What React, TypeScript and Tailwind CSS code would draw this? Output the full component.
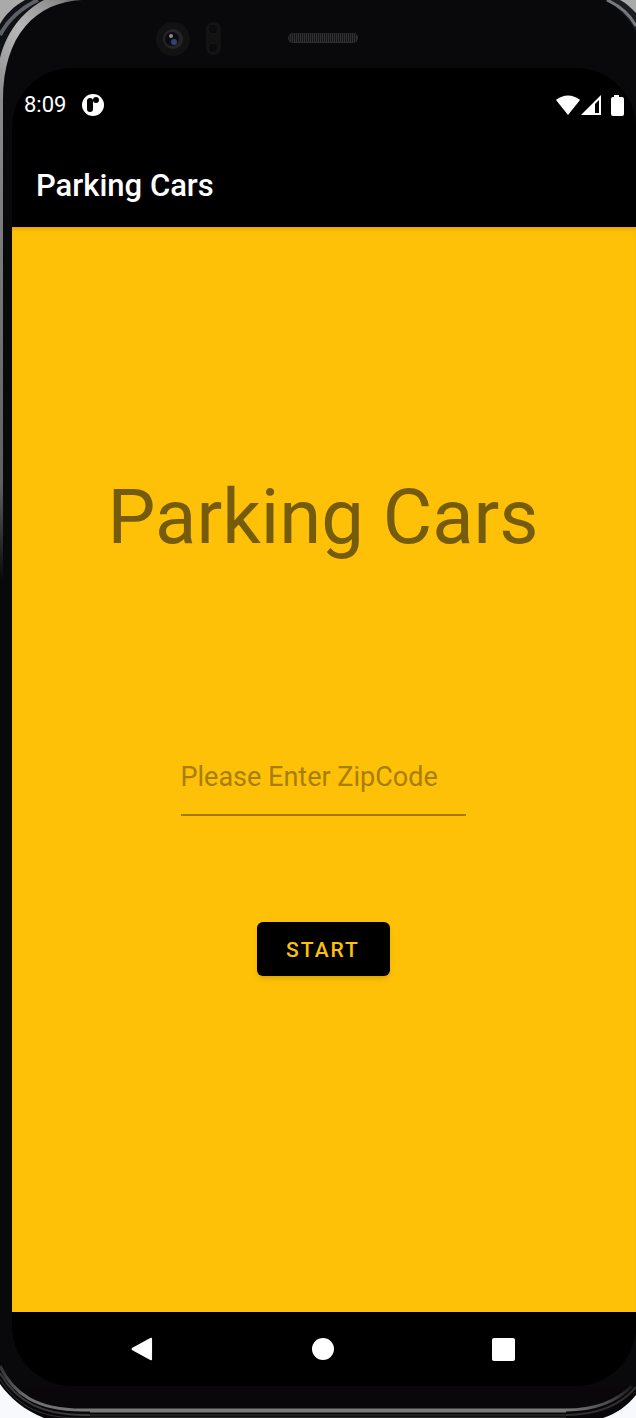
import { useState } from "react";

const font = "font-['Roboto',sans-serif]";

function TopLeftCorner() {
  return (
    <svg className="absolute top-0 left-0" width="90" height="100" viewBox="0 0 90 100" fill="none" aria-hidden="true">
      <defs>
        <linearGradient id="tl" x1="0" y1="100" x2="90" y2="0" gradientUnits="userSpaceOnUse">
          <stop offset="0" stopColor="#8a8a8a" />
          <stop offset="0.5" stopColor="#b8b8b8" />
          <stop offset="0.85" stopColor="#888" />
          <stop offset="1" stopColor="#444" />
        </linearGradient>
      </defs>
      <path d="M0 0H80C35 0 3 35 3 100H0Z" fill="#101114" />
      <path d="M0 35C8 20 21 8 38 0" stroke="#5d6067" strokeWidth="4" />
      <path d="M0 0H25C14 6 5 15 0 24Z" fill="#aaa" />
      <path d="M44 0H82C36 2 3 35 3 100H0V58C6 34 21 12 44 0Z" fill="url(#tl)" />
    </svg>
  );
}

function TopRightCorner() {
  return (
    <svg className="absolute top-0 right-0" width="36" height="34" viewBox="0 0 36 34" fill="none" aria-hidden="true">
      <path d="M5 0H36V32C29 18 18 7 5 0Z" fill="#1c1d20" />
      <path d="M7 0C20 6 30 15 36 26" stroke="#77797d" strokeWidth="3" />
      <path d="M20 0H36V13C31 8 26 3 20 0Z" fill="#aaa" />
    </svg>
  );
}

function BottomLeftCorner() {
  return (
    <svg className="absolute bottom-0 left-0" width="90" height="78" viewBox="0 0 90 78" fill="none" aria-hidden="true">
      <defs>
        <linearGradient id="bl" x1="0" y1="20" x2="90" y2="70" gradientUnits="userSpaceOnUse">
          <stop offset="0" stopColor="#2c2d2e" />
          <stop offset="0.4" stopColor="#6c6e70" />
          <stop offset="1" stopColor="#797b79" />
        </linearGradient>
      </defs>
      <rect y="46" width="90" height="32" fill="#09070a" />
      <path d="M0 26C13 54 37 70 82 70H90" stroke="url(#bl)" strokeWidth="3" />
      <path d="M0 33C14 58 38 75 82 75H90" stroke="#3a3a3a" strokeWidth="2" />
      <path d="M0 39C14 62 36 78 78 78H90" stroke="#333" strokeWidth="1" />
      <path d="M0 44C10 58 24 70 44 78H0Z" fill="#f8f9fd" />
    </svg>
  );
}

function BottomRightCorner() {
  return (
    <svg className="absolute right-0 bottom-0" width="70" height="78" viewBox="0 0 70 78" fill="none" aria-hidden="true">
      <defs>
        <linearGradient id="br" x1="0" y1="0" x2="70" y2="0" gradientUnits="userSpaceOnUse">
          <stop offset="0" stopColor="#797b79" />
          <stop offset="0.6" stopColor="#4a4b4b" />
          <stop offset="1" stopColor="#111" />
        </linearGradient>
      </defs>
      <rect y="46" width="70" height="32" fill="#09070a" />
      <path d="M0 70C28 70 50 62 66 46" stroke="url(#br)" strokeWidth="3" />
      <path d="M0 75C32 75 54 66 70 47" stroke="#303030" strokeWidth="2" />
      <path d="M70 55C61 66 50 74 37 78H70Z" fill="#f8f9fd" />
    </svg>
  );
}

function Bezel() {
  return (
    <div className="flex h-[68px] shrink-0 items-center bg-[#09090b] pt-2 pl-[156px]">
      <svg width="68" height="36" viewBox="0 0 68 36" aria-hidden="true">
        <circle cx="17" cy="19" r="17" fill="#121213" />
        <circle cx="17" cy="19" r="10" fill="#242426" />
        <circle cx="16" cy="19" r="7" fill="#0b0c12" />
        <circle cx="18" cy="22" r="3" fill="#34426e" />
        <circle cx="15" cy="16" r="2" fill="#8a8b90" />
        <rect x="50" y="2" width="15" height="33" rx="7" fill="#121213" />
        <circle cx="57" cy="9" r="5" fill="#0b0b0c" stroke="#19191a" />
        <circle cx="57" cy="28" r="5" fill="#0b0b0c" stroke="#19191a" />
      </svg>
      <svg className="ml-16" width="70" height="12" viewBox="0 0 70 12" aria-hidden="true">
        <defs>
          <pattern id="mesh" width="2" height="2" patternUnits="userSpaceOnUse">
            <rect width="2" height="2" fill="#161616" />
            <rect width="1" height="2" fill="#303030" />
          </pattern>
        </defs>
        <rect x="0" y="1" width="70" height="10" rx="5" fill="#2c2c2c" />
        <rect x="1" y="1" width="68" height="9" rx="4" fill="url(#mesh)" />
      </svg>
    </div>
  );
}

function StatusBar() {
  return (
    <div className="flex h-[74px] shrink-0 items-center justify-between px-3">
      <div className="flex items-center gap-4 text-[22px] leading-6 text-white">
        <span>8:09</span>
        <svg width="22" height="24" viewBox="0 0 22 24" aria-hidden="true">
          <circle cx="11" cy="12" r="11" fill="#fff" />
          <rect x="5" y="5" width="6" height="14" rx="3" fill="#000" />
          <circle cx="14" cy="7" r="3" fill="#000" />
        </svg>
      </div>
      <svg width="68" height="22" viewBox="0 0 68 22" fill="#fff" aria-hidden="true">
        <path d="M0 6C7 0 17 0 24 6L12 21Z" />
        <path fillRule="evenodd" d="M25 21L45 1V21ZM39 10V19H43V6Z" />
        <path d="M58 1H63V3H66Q68 3 68 5V20Q68 22 66 22H57Q55 22 55 20V5Q55 3 57 3H58Z" />
      </svg>
    </div>
  );
}

export default function App() {
  const [zip, setZip] = useState("");
  return (
    <div className={`relative flex min-h-screen w-full flex-col overflow-hidden bg-[#09090b] ${font}`}>
      <Bezel />
      <div className="ml-3 flex grow flex-col overflow-hidden rounded-[60px] bg-black">
        <StatusBar />
        <header className="flex h-[85px] shrink-0 items-center px-6 pt-0.5">
          <h1 className="text-[31px] leading-9 font-medium text-white">Parking Cars</h1>
        </header>
        <main className="flex grow flex-col items-center bg-[#ffc107] pt-[242px] pr-0.5 shadow-[inset_0_4px_4px_-2px_rgba(0,0,0,0.15)]">
          <h2 className="text-[76px] leading-[96px] text-[#755b0c]">Parking Cars</h2>
          <input
            type="text"
            inputMode="numeric"
            aria-label="Zip code"
            value={zip}
            onChange={(e) => setZip(e.target.value)}
            placeholder="Please Enter ZipCode"
            className="mt-[175px] h-[76px] w-[285px] border-b-2 border-[#a17c0c] bg-transparent text-[27px] text-black outline-none placeholder:text-[#a67e0a]"
          />
          <button
            type="button"
            className="mt-[106px] h-[54px] w-[133px] rounded-md bg-black pt-1 text-[21px] font-medium tracking-[2px] text-[#ffc107] shadow-md"
          >
            START
          </button>
        </main>
        <nav className="grid h-[74px] shrink-0 grid-cols-3 place-items-center pr-[42px] pl-10">
          <button type="button" aria-label="Back">
            <svg width="22" height="26" viewBox="0 0 24 26" fill="#fff"><path d="M1 12L21 1Q23 0 23 2V24Q23 26 21 25L1 14Q0 13 1 12Z" /></svg>
          </button>
          <button type="button" aria-label="Home" className="size-[22px] rounded-full bg-white" />
          <button type="button" aria-label="Recent apps" className="size-[23px] rounded-[2px] bg-white" />
        </nav>
      </div>
      <div className="h-8 shrink-0 bg-[linear-gradient(#09070a_0,#09070a_22px,#797b79_23px,#797b79_26px,#080808_27px,#080808_28px,#3a3a3a_29px,#080808_30px,#333_32px)]" />
      <div className="absolute top-[100px] left-0 h-[480px] w-[3px] bg-[linear-gradient(#8a8a8a,#606060_80%,#09090b)]" />
      <TopLeftCorner />
      <TopRightCorner />
      <BottomLeftCorner />
      <BottomRightCorner />
    </div>
  );
}
